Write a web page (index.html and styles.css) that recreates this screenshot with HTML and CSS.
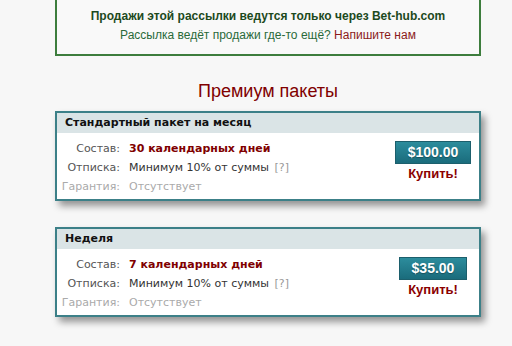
FILE: index.html
```html
<!DOCTYPE html>
<html lang="ru">
<head>
    <meta charset="UTF-8">
    <meta name="viewport" content="width=device-width, initial-scale=1.0">
    <title>Премиум пакеты</title>
    <link rel="stylesheet" href="styles.css">
</head>
<body>
    <div class="page">
        <div class="notice">
            <p class="notice-main">Продажи этой рассылки ведутся только через Bet-hub.com</p>
            <p class="notice-sub">Рассылка ведёт продажи где-то ещё? <a href="#">Напишите нам</a></p>
        </div>

        <h2 class="title">Премиум пакеты</h2>

        <div class="package">
            <div class="package-head">Стандартный пакет на месяц</div>
            <div class="package-body">
                <dl class="terms">
                    <dt>Состав:</dt>
                    <dd class="days">30 календарных дней</dd>
                    <dt>Отписка:</dt>
                    <dd>Минимум 10% от суммы <span class="hint">[?]</span></dd>
                    <dt class="muted">Гарантия:</dt>
                    <dd class="muted">Отсутствует</dd>
                </dl>
                <div class="buy">
                    <span class="price">$100.00</span>
                    <a href="#" class="buy-link">Купить!</a>
                </div>
            </div>
        </div>

        <div class="package">
            <div class="package-head">Неделя</div>
            <div class="package-body">
                <dl class="terms">
                    <dt>Состав:</dt>
                    <dd class="days">7 календарных дней</dd>
                    <dt>Отписка:</dt>
                    <dd>Минимум 10% от суммы <span class="hint">[?]</span></dd>
                    <dt class="muted">Гарантия:</dt>
                    <dd class="muted">Отсутствует</dd>
                </dl>
                <div class="buy">
                    <span class="price">$35.00</span>
                    <a href="#" class="buy-link">Купить!</a>
                </div>
            </div>
        </div>
    </div>
</body>
</html>
```

FILE: styles.css
```css
body {
    margin: 0;
    background: #f7f7f7;
    font-family: 'Liberation Sans', Arial, sans-serif;
    color: #333;
    overflow: hidden;
}
.page {
    width: 426px;
    margin-left: 55px;
}
.notice {
    margin-top: -20px;
    border: 2px solid #3d7d3d;
    background: #f9f9f9;
    padding: 25px 0 9px 0;
    text-align: center;
    font-size: 12px;
}
.notice p {
    margin: 0;
    line-height: 19px;
}
.notice-main {
    font-weight: bold;
    color: #1d4a1d;
}
.notice-sub {
    color: #2a6a3a;
}
.notice-sub a {
    color: #8b1a1a;
    text-decoration: none;
}
.title {
    margin: 24px 0 0 0;
    font-size: 18px;
    font-weight: normal;
    line-height: 22px;
    color: #800000;
    text-align: center;
}
.package {
    margin-top: 9px;
    margin-bottom: 26px;
    background: #fff;
    border: 2px solid #3c8088;
    box-shadow: 4px 5px 7px rgba(0, 0, 0, 0.4);
}
.package-head {
    background: #dae4e6;
    height: 20px;
    line-height: 20px;
    padding-left: 8px;
    font-family: 'DejaVu Sans', Verdana, sans-serif;
    font-size: 11px;
    font-weight: bold;
    color: #111;
}
.package-body {
    display: flex;
    justify-content: space-between;
    padding: 6px 0 3px 0;
}
.terms {
    display: grid;
    grid-template-columns: 63px auto;
    column-gap: 9px;
    margin: 0;
    font-family: 'DejaVu Sans', Verdana, sans-serif;
    font-size: 11px;
    line-height: 19px;
}
.terms dt {
    text-align: right;
    color: #555;
}
.terms dd {
    margin: 0;
    color: #333;
}
.terms .days {
    color: #800000;
    font-weight: bold;
}
.terms .muted {
    color: #aaa;
}
.hint {
    color: #999;
    margin-left: 2px;
}
.buy {
    width: 90px;
    margin-right: 1px;
    padding-top: 2px;
    display: flex;
    flex-direction: column;
    align-items: center;
}
.price {
    display: block;
    height: 21px;
    line-height: 21px;
    padding: 0 12px;
    border: 1px solid #1c5f6c;
    background: linear-gradient(#2c8c9c, #1a6c7c);
    color: #fff;
    font-weight: bold;
    font-size: 14px;
    text-shadow: 0 1px 1px rgba(0, 0, 0, 0.3);
}
.buy-link {
    margin-top: 1px;
    color: #8b0000;
    font-weight: bold;
    font-size: 13px;
    line-height: 17px;
    text-decoration: none;
}
```
